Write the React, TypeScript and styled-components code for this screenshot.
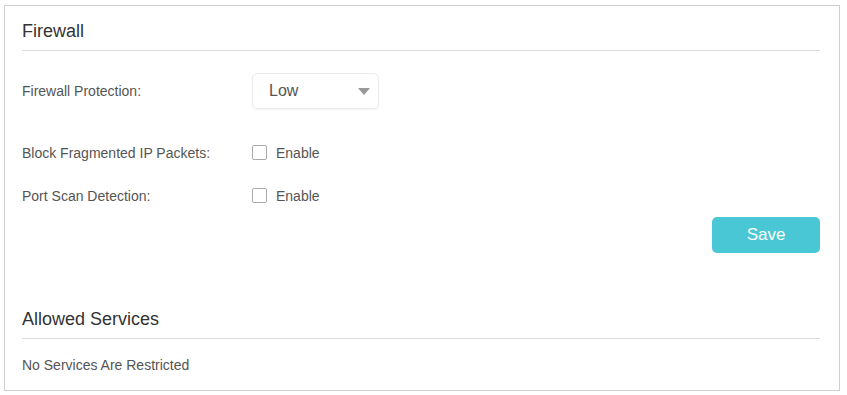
import React from "react";
import styled, { createGlobalStyle } from "styled-components";

const Global = createGlobalStyle`
  html, body {
    margin: 0;
    padding: 0;
    background: #fff;
  }
  body {
    font-family: "Liberation Sans", Arial, sans-serif;
  }
`;

const Page = styled.div`
  padding: 5px 7px 4px 4px;
`;

const Panel = styled.div`
  border: 1px solid #cfcfcf;
  padding: 13px 19px 14px 17px;
  height: 386px;
  box-sizing: border-box;
`;

const SectionTitle = styled.h2`
  margin: 0;
  font-size: 18px;
  font-weight: normal;
  color: #333;
  line-height: 24px;
  padding-bottom: 7px;
  border-bottom: 1px solid #dcdcdc;
`;

const Form = styled.div`
  display: flex;
  flex-direction: column;
  padding-top: 22px;
`;

const Row = styled.div<{ $height: number }>`
  display: flex;
  align-items: center;
  height: ${(p) => p.$height}px;
`;

const Label = styled.div`
  width: 230px;
  font-size: 14px;
  color: #555;
`;

const Select = styled.div`
  width: 127px;
  height: 36px;
  box-sizing: border-box;
  border: 1px solid #ececec;
  border-radius: 5px;
  box-shadow: 0 1px 2px rgba(0, 0, 0, 0.05);
  display: flex;
  align-items: center;
  justify-content: space-between;
  padding: 0 8px 0 16px;
  font-size: 16px;
  color: #555;
`;

const Caret = styled.span`
  width: 0;
  height: 0;
  border-left: 6px solid transparent;
  border-right: 6px solid transparent;
  border-top: 7px solid #999;
`;

const CheckLabel = styled.label`
  display: flex;
  align-items: center;
  gap: 9px;
  font-size: 14px;
  color: #555;
`;

const Box = styled.span`
  width: 13px;
  height: 13px;
  border: 1px solid #aaa;
  border-radius: 2px;
  background: #fff;
`;

const Actions = styled.div`
  display: flex;
  justify-content: flex-end;
`;

const SaveButton = styled.button`
  width: 108px;
  height: 36px;
  border: none;
  border-radius: 5px;
  background: #4ac7d4;
  color: #fff;
  font-family: inherit;
  font-size: 17px;
`;

const Lower = styled.div`
  padding-top: 54px;
`;

const Note = styled.div`
  font-size: 14px;
  color: #555;
  padding-top: 18px;
`;

const Checkbox: React.FC = () => (
  <CheckLabel>
    <Box />
    Enable
  </CheckLabel>
);

const App: React.FC = () => {
  return (
    <Page>
      <Global />
      <Panel>
        <SectionTitle>Firewall</SectionTitle>
        <Form>
          <Row $height={36}>
            <Label>Firewall Protection:</Label>
            <Select>
              Low
              <Caret />
            </Select>
          </Row>
          <Row $height={43} style={{ marginTop: 22 }}>
            <Label>Block Fragmented IP Packets:</Label>
            <Checkbox />
          </Row>
          <Row $height={43}>
            <Label>Port Scan Detection:</Label>
            <Checkbox />
          </Row>
        </Form>
        <Actions>
          <SaveButton>Save</SaveButton>
        </Actions>
        <Lower>
          <SectionTitle>Allowed Services</SectionTitle>
          <Note>No Services Are Restricted</Note>
        </Lower>
      </Panel>
    </Page>
  );
};

export default App;
